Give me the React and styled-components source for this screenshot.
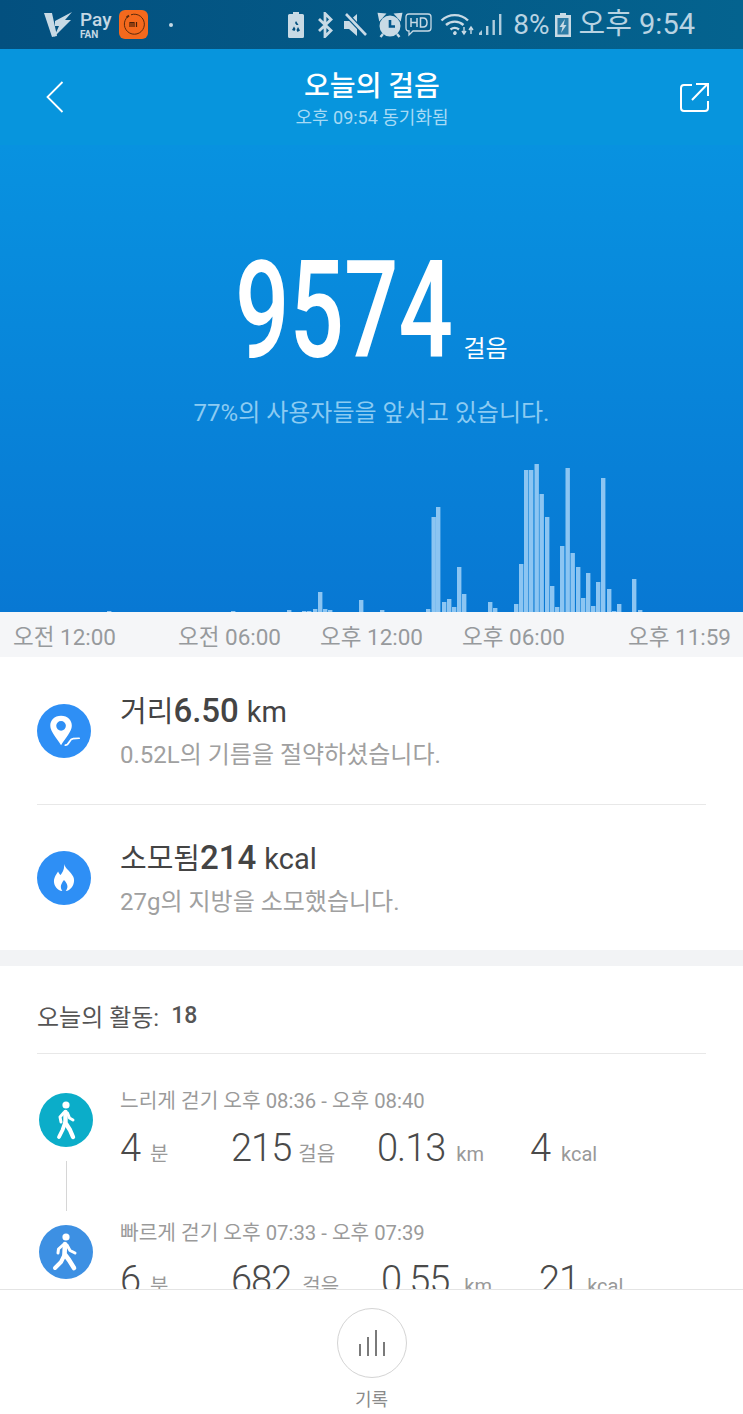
import React from 'react';
import styled, { createGlobalStyle } from 'styled-components';

const GlobalStyle = createGlobalStyle`
  html, body { margin: 0; padding: 0; background: #fff; }
  * { box-sizing: border-box; }
  body { font-family: Roboto, "Noto Sans CJK KR", sans-serif; }
`;

const Page = styled.div`
  width: 743px;
  height: 1414px;
  display: flex;
  flex-direction: column;
  overflow: hidden;
  background: #fff;
`;

/* status bar */
const StatusBar = styled.div`
  height: 49px;
  flex: none;
  display: flex;
  align-items: center;
  justify-content: space-between;
  padding: 0 48px 0 44px;
  background: linear-gradient(90deg, #03507f, #04638f);
  color: #b9d3e2;
`;
const StatusGroup = styled.div`
  display: flex;
  align-items: center;
  gap: ${({ $gap }) => $gap ?? 8}px;
`;
const PayText = styled.div`
  display: flex;
  flex-direction: column;
  font-weight: 500;
  font-size: 19px;
  line-height: 20px;
  color: #c5d8e4;
  span { font-size: 10px; line-height: 10px; font-weight: 700; }
`;
const MiBadge = styled.div`
  width: 29px;
  height: 29px;
  border-radius: 6px;
  background: #f4691d;
  display: flex;
  align-items: center;
  justify-content: center;
`;
const Dot = styled.div`
  width: 4px;
  height: 4px;
  border-radius: 50%;
  background: #c5d8e4;
  margin-left: 13px;
`;
const StatusText = styled.span`
  font-size: ${({ $size }) => $size}px;
  line-height: 1;
  white-space: nowrap;
  margin-left: ${({ $ml }) => $ml || 0}px;
`;

/* blue part */
const Header = styled.div`
  height: 96px;
  flex: none;
  display: flex;
  align-items: center;
  justify-content: space-between;
  padding: 0 33px 0 46px;
  background: #0795dd;
  color: #fff;
`;
const HeaderTitle = styled.div`
  display: flex;
  flex-direction: column;
  align-items: center;
  margin-top: 6px;
`;
const TitleText = styled.div`
  font-size: 28px;
  line-height: 36px;
  font-weight: 500;
`;
const SubTitle = styled.div`
  font-size: 18px;
  line-height: 26px;
  color: #a6daf5;
`;
const Hero = styled.div`
  height: 467px;
  flex: none;
  display: flex;
  flex-direction: column;
  align-items: center;
  background: linear-gradient(180deg, #0892e0, #0878d3);
`;
const CountRow = styled.div`
  display: flex;
  align-items: baseline;
  margin-top: 96px;
  height: 140px;
`;
const CountNumber = styled.span`
  display: inline-block;
  width: 215px;
  font-size: 135px;
  line-height: 140px;
  font-weight: 500;
  color: #fff;
  white-space: nowrap;
  transform: scaleX(0.71);
  transform-origin: left center;
`;
const CountUnit = styled.span`
  font-size: 24px;
  color: #fff;
  margin-left: 13px;
`;
const HeroNote = styled.div`
  font-size: 24px;
  line-height: 30px;
  color: #8ccbf2;
  margin-top: 17px;
`;
const Chart = styled.svg`
  display: block;
  margin-top: auto;
  flex: none;
`;
const AxisRow = styled.div`
  height: 45px;
  flex: none;
  display: flex;
  align-items: center;
  gap: 40px;
  padding: 0 13px;
  background: #f5f6f8;
  color: #979a9d;
  font-size: 22.5px;
`;
const AxisLabel = styled.span`
  width: 102px;
  white-space: nowrap;
  &:first-child { margin-right: 23px; }
  &:last-child { margin-left: 24px; }
`;

/* distance / calories */
const Stats = styled.div`
  flex: none;
  padding: 0 37px;
  border-bottom: 16px solid #f2f3f5;
`;
const StatRow = styled.div`
  height: ${({ $h }) => $h}px;
  display: flex;
  align-items: center;
  gap: 29px;
  & + & { border-top: 1px solid #e8e8e8; }
`;
const RoundIcon = styled.div`
  width: 54px;
  height: 54px;
  flex: none;
  border-radius: 50%;
  background: ${({ $bg }) => $bg};
  display: flex;
  align-items: center;
  justify-content: center;
`;
const StatTitle = styled.div`
  display: flex;
  align-items: baseline;
  color: #444;
  font-size: 29px;
  line-height: 40px;
`;
const StatValue = styled.span`
  font-size: 33px;
  font-weight: 500;
  margin-right: 8px;
`;
const StatNote = styled.div`
  color: #a0a0a0;
  font-size: 24px;
  line-height: 32px;
  margin-top: 7px;
`;

/* activity list */
const Activities = styled.div`
  flex: 1;
  min-height: 0;
  overflow: hidden;
  padding: 0 37px;
`;
const ActivityHead = styled.div`
  height: 88px;
  display: flex;
  align-items: center;
  gap: 12px;
  color: #555;
  font-size: 24px;
  border-bottom: 1px solid #e8e8e8;
  padding-top: 12px;
  b { font-weight: 500; font-size: 23px; }
`;
const ActivityList = styled.div`
  display: flex;
  flex-direction: column;
  padding-top: 32px;
`;
const ActivityRow = styled.div`
  display: flex;
  gap: 27px;
  height: 132px;
  padding-left: 2px;
`;
const Rail = styled.div`
  width: 54px;
  flex: none;
  display: flex;
  flex-direction: column;
  align-items: center;
  gap: 14px;
  padding-top: 7px;
`;
const Connector = styled.div`
  width: 1px;
  height: 50px;
  background: #d6d6d6;
`;
const ActivityBody = styled.div`
  display: flex;
  flex-direction: column;
`;
const ActivityTime = styled.div`
  color: #9a9a9a;
  font-size: 20.3px;
  line-height: 30px;
  white-space: nowrap;
`;
const Metrics = styled.div`
  display: flex;
  align-items: baseline;
  height: 60px;
  margin-top: 2px;
`;
const Metric = styled.div`
  display: flex;
  align-items: baseline;
  width: ${({ $w }) => $w}px;
  flex: none;
  color: #4a4a4a;
  font-size: 38px;
  font-weight: 300;
  letter-spacing: -1px;
  line-height: 60px;
  white-space: nowrap;
  span {
    color: #999;
    font-size: 20px;
    font-weight: 400;
    letter-spacing: 0;
    margin-left: ${({ $unitGap }) => $unitGap}px;
  }
`;

/* bottom tab */
const BottomBar = styled.div`
  height: 125px;
  flex: none;
  display: flex;
  flex-direction: column;
  align-items: center;
  padding-top: 18px;
  border-top: 1px solid #e4e4e4;
  background: #fff;
`;
const HistoryButton = styled.div`
  width: 70px;
  height: 70px;
  border-radius: 50%;
  border: 1px solid #d4d4d4;
  display: flex;
  align-items: center;
  justify-content: center;
`;
const HistoryLabel = styled.div`
  color: #8a8a8a;
  font-size: 18px;
  line-height: 24px;
  margin-top: 10px;
`;

const bars = [
  [107, 611], [231, 611], [287, 610], [302, 611], [307, 611], [313, 609], [318, 592], [323, 609],
  [328, 610], [359, 600], [380, 610], [426, 609], [431.5, 517], [436, 507], [442, 602], [447, 599],
  [452, 607], [457, 567], [462, 594], [488, 602], [493, 608], [514, 604], [519, 564], [524, 470],
  [529, 470], [534.5, 464], [539.5, 494], [545, 517], [550, 586], [555, 607], [560, 546], [565.5, 468],
  [570.5, 553], [576, 567], [581, 598], [586, 573], [591, 606], [596, 582], [601, 478], [607, 589],
  [612, 611], [617, 604], [632, 579], [638, 610],
];

const axisLabels = ['오전 12:00', '오전 06:00', '오후 12:00', '오후 06:00', '오후 11:59'];

const activities = [
  {
    time: '느리게 걷기 오후 08:36 - 오후 08:40',
    color: '#0badc9',
    fast: false,
    metrics: [['4', '분', 111, 10], ['215', '걸음', 146, 7], ['0.13', 'km', 153, 11], ['4', 'kcal', 100, 11]],
  },
  {
    time: '빠르게 걷기 오후 07:33 - 오후 07:39',
    color: '#3d90e3',
    fast: true,
    metrics: [['6', '분', 111, 10], ['682', '걸음', 150, 11], ['0.55', 'km', 158, 15], ['21', 'kcal', 100, 8]],
  },
];

const WalkIcon = ({ fast }) => (
  <svg width="32" height="40" viewBox="0 0 32 40" fill="none">
    <circle cx="16" cy="5" r="3.6" fill="#fff" />
    {fast ? (
      <g stroke="#fff" strokeLinecap="round" strokeLinejoin="round" fill="none">
        <path d="M15 12 L14.5 22 L19 28 L24 36" strokeWidth="4.6" />
        <path d="M14.5 23 L11 30 L5 36" strokeWidth="4" />
        <path d="M13.5 12.5 L8.5 17 L8 21" strokeWidth="3" />
        <path d="M17 13 L20 18.5 L25 21" strokeWidth="3" />
      </g>
    ) : (
      <g stroke="#fff" strokeLinecap="round" strokeLinejoin="round" fill="none">
        <path d="M15.5 12 L15.5 23 L20 30 L23 37" strokeWidth="4.4" />
        <path d="M15 23 L12.5 30 L9 37" strokeWidth="3.8" />
        <path d="M14 12.5 L10 17 L11 22" strokeWidth="3" />
        <path d="M17.5 13 L19.5 18 L23 20" strokeWidth="3" />
      </g>
    )}
  </svg>
);

const App = () => (
  <Page>
    <GlobalStyle />
    <StatusBar>
      <StatusGroup>
        <svg width="28" height="27" viewBox="0 0 28 27" fill="#c8dae5">
          <path d="M0 2 L8 2 L13 25 L8 26 Z" />
          <path d="M11 10 L28 1 L21 9 L27 9 L10 26 L15 15 L11 15 Z" />
        </svg>
        <PayText>Pay<span>FAN</span></PayText>
        <MiBadge>
          <svg width="25" height="25" viewBox="0 0 25 25" fill="none">
            <path d="M7 4.5 A10 10 0 1 0 10 2.8" stroke="#5b2a0c" strokeWidth="1" />
            <path d="M5.5 5.5 L8 3.5" stroke="#5b2a0c" strokeWidth="1.8" />
            <path d="M9 15 V10.5 H13 V15 M11 10.5 V15 M15.5 10 V15" stroke="#4a2008" strokeWidth="1.2" />
          </svg>
        </MiBadge>
        <Dot />
      </StatusGroup>
      <StatusGroup $gap={0}>
        <svg width="18" height="26" viewBox="0 0 18 26" fill="#c8dae5">
          <path d="M6 0 H12 V2 H15.5 Q17 2 17 3.5 V24.5 Q17 26 15.5 26 H2.5 Q1 26 1 24.5 V3.5 Q1 2 2.5 2 H6 Z" />
          <path d="M9 9 L11.5 13 H9.5 L8 11 Z M5 18 L7 14.5 L8.5 17 L7.5 19 Z M13 18.5 L11 15 L9.5 18 L10.5 20 Z" fill="#03507f" />
        </svg>
        <svg style={{ marginLeft: 12 }} width="17" height="26" viewBox="0 0 17 26" fill="none">
          <path d="M2 7 L14 18.5 L8 24.5 V1.5 L14 7.5 L2 19" stroke="#c8dae5" strokeWidth="2.8" />
        </svg>
        <svg style={{ marginLeft: 9 }} width="25" height="26" viewBox="0 0 25 26" fill="#c8dae5">
          <path d="M1 9 H6 L14 2 V24 L6 17 H1 Z" />
          <path d="M3 2 L23 23" stroke="#04578a" strokeWidth="5" />
          <path d="M3 2 L23 23" stroke="#c8dae5" strokeWidth="2.6" />
        </svg>
        <svg style={{ marginLeft: 9 }} width="26" height="26" viewBox="0 0 26 26" fill="#c8dae5">
          <circle cx="13" cy="14" r="10.5" />
          <path d="M3 7 L7 2.5 L2 2 Z M23 7 L19 2.5 L24 2 Z M6 22 L3.5 25 M20 22 L22.5 25" stroke="#c8dae5" strokeWidth="2.4" />
          <path d="M13 8 V14.5 H18" fill="none" stroke="#04578a" strokeWidth="2.6" />
        </svg>
        <svg style={{ marginLeft: 2 }} width="27" height="25" viewBox="0 0 27 25" fill="none">
          <path d="M4 2 H23 Q26 2 26 5 V16 Q26 19 23 19 H8 L4 23 V19 Q1 19 1 16 V5 Q1 2 4 2 Z" stroke="#c8dae5" strokeWidth="1.3" />
          <path d="M6 6 V15 M12 6 V15 M6 10.5 H12 M15.5 6 V15 H18 Q22 15 22 10.5 Q22 6 18 6 Z" stroke="#c8dae5" strokeWidth="1.5" />
        </svg>
        <svg style={{ marginLeft: 8 }} width="35" height="25" viewBox="0 0 35 25" fill="none">
          <path d="M1.5 8.5 A19 19 0 0 1 28 8.5 M6 13 A13 13 0 0 1 23.5 13 M10.5 17.5 A7 7 0 0 1 19 17.5" stroke="#c8dae5" strokeWidth="2.4" />
          <path d="M15 21 L14.8 21.2" stroke="#c8dae5" strokeWidth="3.6" strokeLinecap="round" />
          <path d="M24 15 V21 M22 19 L24 22 L26 19 M31 22 V16 M29 18 L31 15 L33 18" stroke="#c8dae5" strokeWidth="1.4" />
        </svg>
        <svg style={{ marginLeft: 3 }} width="25" height="25" viewBox="0 0 25 25" fill="#b0cddd">
          <path d="M1 21 L4 18 V23 H1 Z" />
          <rect x="8" y="14" width="2.4" height="9" />
          <rect x="14.5" y="8" width="2.4" height="15" />
          <rect x="21" y="2" width="2.4" height="21" />
        </svg>
        <StatusText $size={28} $ml={10}>8%</StatusText>
        <svg style={{ marginLeft: 4 }} width="18" height="26" viewBox="0 0 18 26" fill="none">
          <path d="M6 1 H12 V3 H17 V25 H1 V3 H6 Z" fill="#c8dae5" />
          <rect x="3.5" y="6" width="11" height="16.5" fill="#2f7da6" />
          <path d="M11 7 L5.5 15 H8.5 L7 21 L12.5 13 H9.5 Z" fill="#c8dae5" />
        </svg>
        <StatusText $size={29} $ml={7}>오후 9:54</StatusText>
      </StatusGroup>
    </StatusBar>

    <Header>
      <svg width="18" height="32" viewBox="0 0 18 32" fill="none">
        <path d="M16.5 1 L1.5 16 L16.5 31" stroke="#fff" strokeWidth="1.8" />
      </svg>
      <HeaderTitle>
        <TitleText>오늘의 걸음</TitleText>
        <SubTitle>오후 09:54 동기화됨</SubTitle>
      </HeaderTitle>
      <svg width="30" height="30" viewBox="0 0 30 30" fill="none">
        <path d="M12 3 H4 Q1 3 1 6 V26 Q1 29 4 29 H25 Q28 29 28 26 V19" stroke="#fff" strokeWidth="2" />
        <path d="M12 18 L27 2.5 M16 2 H28 V14" stroke="#fff" strokeWidth="2" />
      </svg>
    </Header>

    <Hero>
      <CountRow>
        <CountNumber>9574</CountNumber>
        <CountUnit>걸음</CountUnit>
      </CountRow>
      <HeroNote>77%의 사용자들을 앞서고 있습니다.</HeroNote>
      <Chart width="743" height="160" viewBox="0 452 743 160">
        {bars.map(([x, top]) => (
          <rect key={x} x={x} y={top} width="4.4" height={612 - top} fill="#8cc5f2" />
        ))}
      </Chart>
    </Hero>
    <AxisRow>
      {axisLabels.map((label) => <AxisLabel key={label}>{label}</AxisLabel>)}
    </AxisRow>

    <Stats>
      <StatRow $h={147}>
        <RoundIcon $bg="#2e8ff5">
          <svg width="31" height="33" viewBox="0 0 36 38" fill="none">
            <path fillRule="evenodd" d="M14 2 C6 2 1.5 7.5 1.5 13.5 C1.5 20 9 28 14 36 C19 28 26.5 20 26.5 13.5 C26.5 7.5 22 2 14 2 Z M14 8 A5.6 5.6 0 1 1 14 19.2 A5.6 5.6 0 1 1 14 8 Z" fill="#fff" />
            <path d="M19 36 C24 36 23 29 28 28.5 C30 28 32 28 35 28" stroke="#fff" strokeWidth="2" strokeLinecap="round" />
          </svg>
        </RoundIcon>
        <div>
          <StatTitle>거리<StatValue>6.50</StatValue>km</StatTitle>
          <StatNote>0.52L의 기름을 절약하셨습니다.</StatNote>
        </div>
      </StatRow>
      <StatRow $h={146}>
        <RoundIcon $bg="#2e8ff5">
          <svg width="22" height="29" viewBox="0 0 26 32" fill="#fff">
            <path fillRule="evenodd" d="M13 0 C15 6 21 9 24 15 C27 22 22 31 15 32 C18 28 18 24 13 19 C9 24 8 28 11 32 C4 31 -1 23 2 16 C3 13 5 11 6 9 C7 11 8 13 9 13 C11 10 14 6 13 0 Z" />
          </svg>
        </RoundIcon>
        <div>
          <StatTitle>소모됨<StatValue>214</StatValue>kcal</StatTitle>
          <StatNote>27g의 지방을 소모했습니다.</StatNote>
        </div>
      </StatRow>
    </Stats>

    <Activities>
      <ActivityHead>오늘의 활동: <b>18</b></ActivityHead>
      <ActivityList>
        {activities.map((item, i) => (
          <ActivityRow key={item.time}>
            <Rail>
              <RoundIcon $bg={item.color}><WalkIcon fast={item.fast} /></RoundIcon>
              {i === 0 && <Connector />}
            </Rail>
            <ActivityBody>
              <ActivityTime>{item.time}</ActivityTime>
              <Metrics>
                {item.metrics.map(([value, unit, w, gap]) => (
                  <Metric key={unit} $w={w} $unitGap={gap}>{value}<span>{unit}</span></Metric>
                ))}
              </Metrics>
            </ActivityBody>
          </ActivityRow>
        ))}
      </ActivityList>
    </Activities>

    <BottomBar>
      <HistoryButton>
        <svg width="28" height="28" viewBox="0 0 28 28" stroke="#7a7a7a" strokeWidth="2" fill="none">
          <path d="M2 27 V15 M10 27 V8 M18 27 V1 M26 27 V13" />
        </svg>
      </HistoryButton>
      <HistoryLabel>기록</HistoryLabel>
    </BottomBar>
  </Page>
);

export default App;
